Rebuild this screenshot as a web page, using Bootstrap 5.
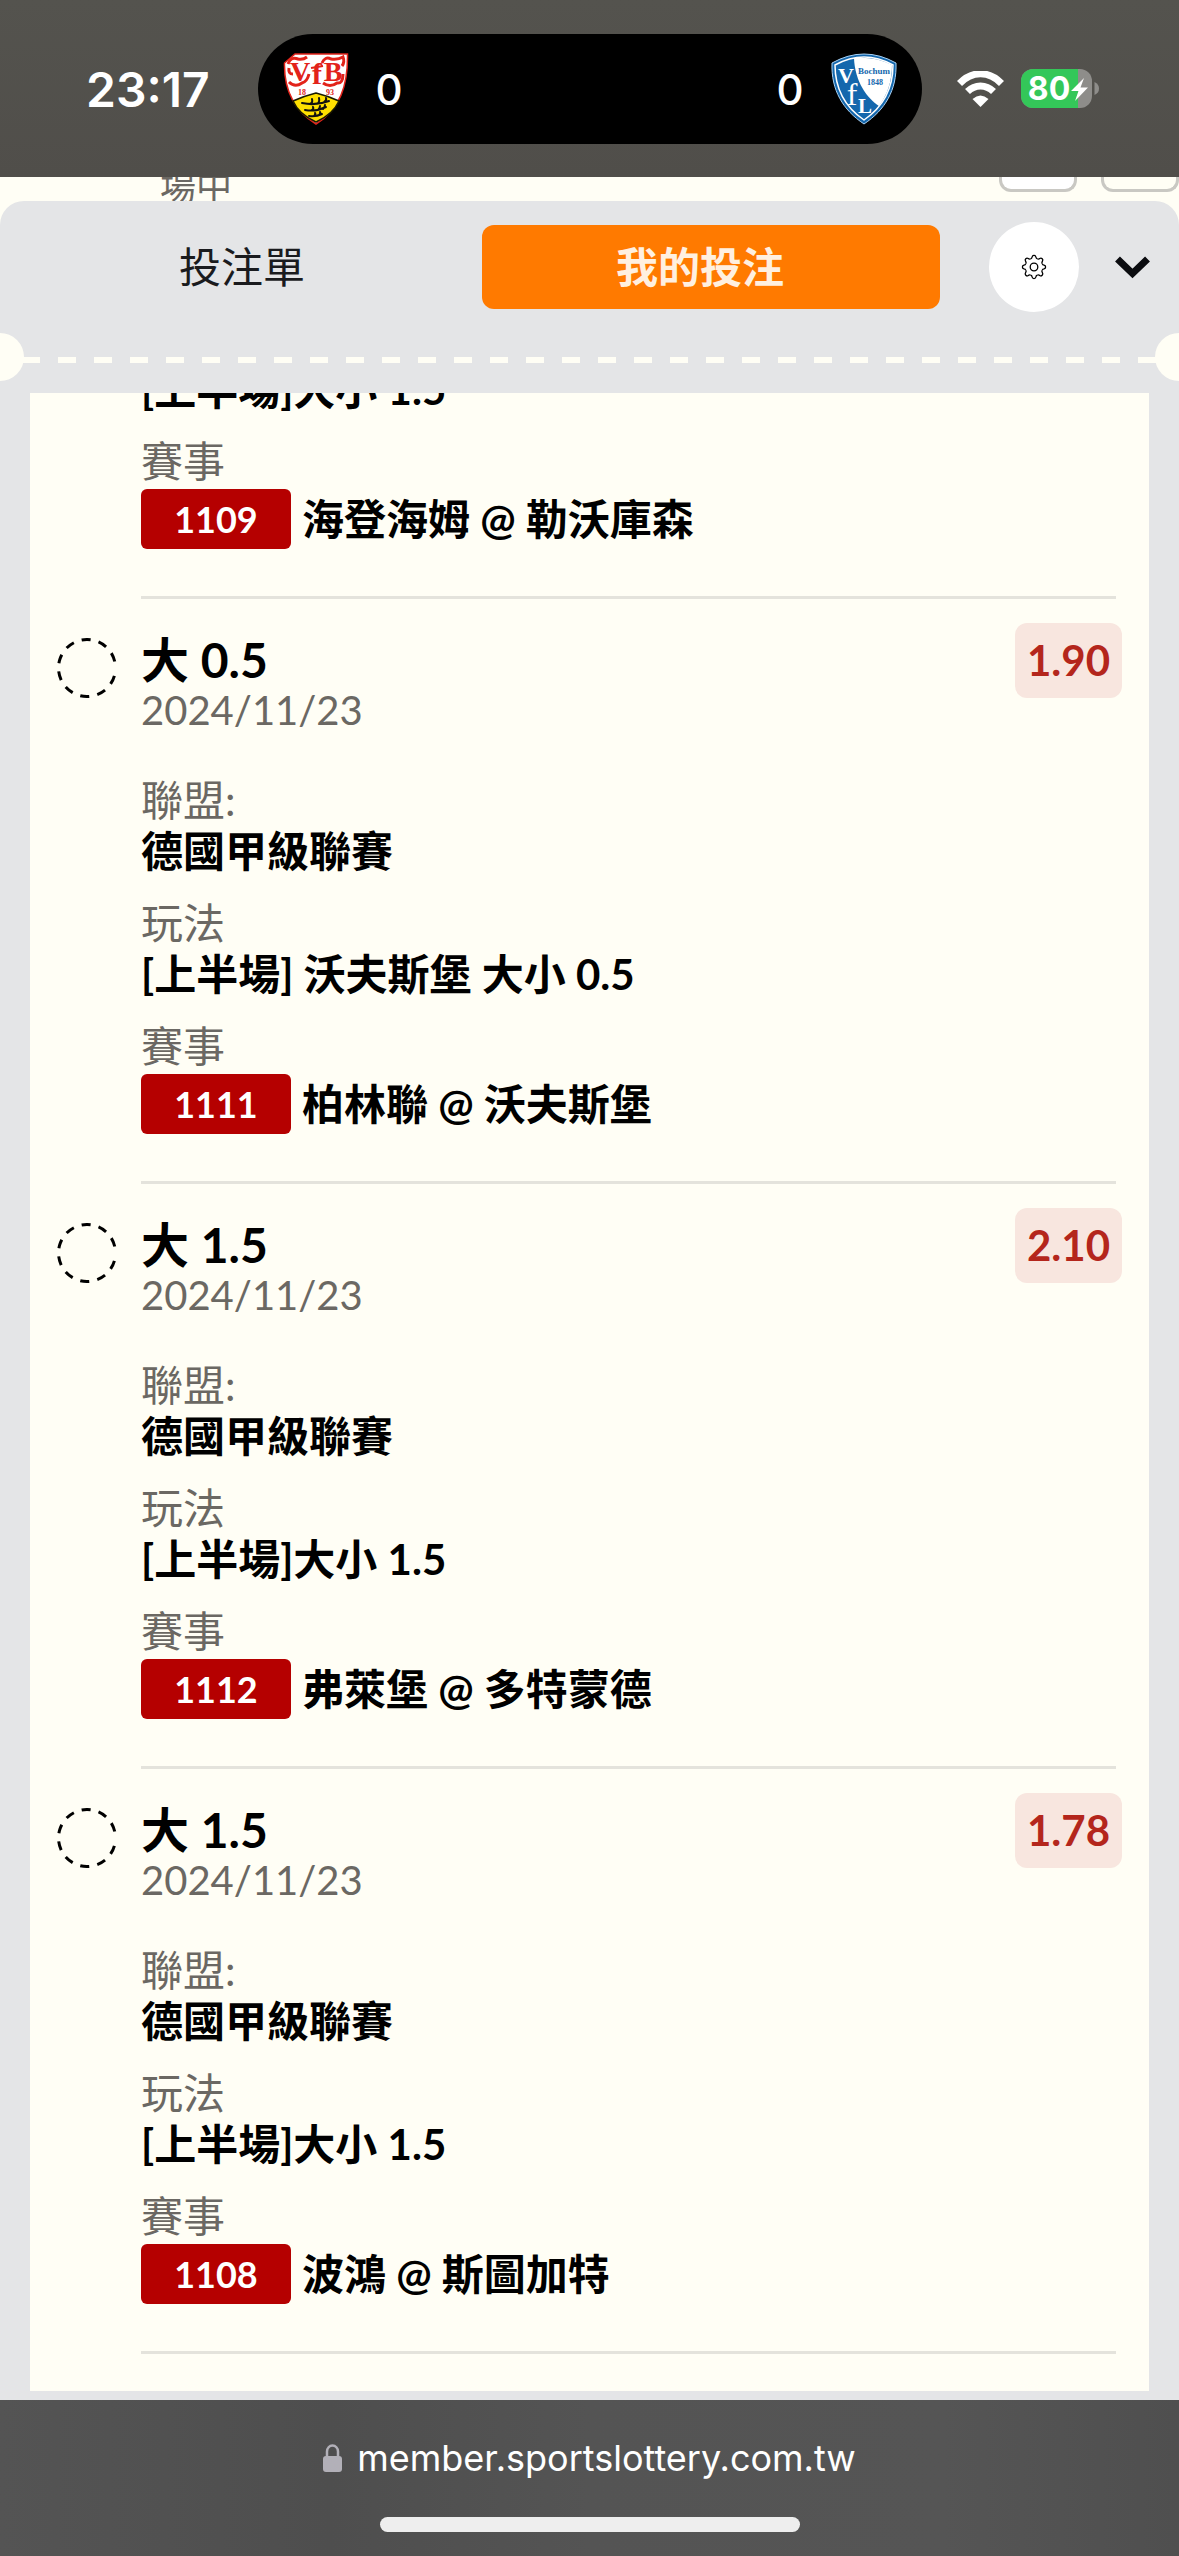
<!DOCTYPE html>
<html lang="zh-Hant">
<head>
<meta charset="utf-8">
<meta name="viewport" content="width=device-width, initial-scale=1">
<title>我的投注</title>
<link href="https://cdn.jsdelivr.net/npm/bootstrap@5.3.0/dist/css/bootstrap.min.css" rel="stylesheet">
<style>
  :root { --paper: #fffef5; --sheet: #e4e5e7; --muted: #6b6863; }
  body { background: var(--paper); color: #000; font-family: Lato, "Noto Sans CJK TC", sans-serif; font-size: 42px; line-height: 51px; }
  .btn { --bs-btn-padding-x: 0; --bs-btn-padding-y: 0; --bs-btn-border-width: 0; }

  /* status bar */
  .status-bar { grid-template-columns: 1fr 664px 1fr; height: 177px; padding-top: 34px; background: linear-gradient(#54534e, #504e4a); font-family: Inter, sans-serif; }
  .status-side { height: 110px; }
  .status-time { padding-left: 86px; font-size: 48px; font-weight: 600; }
  .status-icons { padding-left: 35px; gap: 17px; }
  .island { height: 110px; padding: 0 25px; background: #000; font-size: 42px; font-weight: 500; }
  .island-team { gap: 27px; }

  /* page behind the sheet */
  .backdrop-strip { height: 24px; padding-left: 160px; font-size: 36px; line-height: 36px; color: var(--muted); }
  .backdrop-text { padding-bottom: 6px; }
  .stub-box { width: 78px; height: 15px; border: 3px solid #c9c8c3; border-top: 0; border-radius: 0 0 12px 12px; }

  /* betting slip sheet */
  .slip-sheet { background: var(--sheet); border-radius: 24px 24px 0 0; min-height: 0; padding-bottom: 9px; }
  .slip-header { padding: 21px 29px 21px 24px; }
  .slip-tab { height: 84px; padding-right: 22px; border-radius: 12px; font-size: 42px; color: #1a1b1e; }
  .slip-tab.active { background: #ff7a00; color: #fff0e0; font-weight: 700; }
  .gear-btn { width: 90px; height: 90px; margin-left: 49px; background: #fff; }
  .fold-btn { margin-left: 36px; }
  .perforation { height: 48px; margin-bottom: 12px; background: linear-gradient(90deg, var(--paper) 50%, transparent 50%) 22px 24px / 36px 6px repeat-x; }
  .notch { width: 24px; height: 48px; background: var(--paper); border-radius: 0 24px 24px 0; }
  .notch-end { border-radius: 24px 0 0 24px; }

  /* bets */
  .bet-list { margin: 0 30px; background: var(--paper); min-height: 0; padding-bottom: 37px; }
  .bet { padding: 0 27px 0 27px; }
  .bet-mark { width: 60px; margin: 39px 24px 0 0; }
  .bet-body { padding-top: 35px; }
  .bet-body.cut { margin-left: 84px; padding-top: 0; }
  .bet-title { font-size: 48px; line-height: 51px; font-weight: 700; }
  .bet-date { color: var(--muted); margin-bottom: 39px; font-size: 40px; }
  .bet-facts dt { color: var(--muted); font-weight: 400; }
  .bet-facts dd { margin-bottom: 21px; font-weight: 700; }
  .bet-facts dd.bet-match { margin: 2px 0 47px; gap: 11px; }
  .match-no { width: 150px; height: 60px; border-radius: 6px; background: #b50000; color: #fff; font-size: 36px; }
  .odds { margin-top: 24px; height: 75px; padding: 0 12px; border-radius: 12px; background: #f8e6df; color: #b4261c; font-weight: 700; }
  .bet-rule { height: 3px; margin: 0 33px 0 111px; background: #e4e3dc; }

  /* browser bar */
  .browser-bar { height: 156px; padding: 40px 0 24px; background: linear-gradient(90deg, #545454, #4e4e4e 28%, #545454 50%, #555 80%, #4f4f4f); }
  .browser-url { gap: 15px; color: #fff; font-family: Inter, sans-serif; font-size: 36px; line-height: 36px; }
  .home-pill { width: 420px; height: 15px; background: #eee; }
</style>
<script src="https://cdn.jsdelivr.net/npm/bootstrap@5.3.0/dist/js/bootstrap.bundle.min.js"></script>
</head>
<body>
<svg class="d-none" aria-hidden="true">
  <symbol id="pending" viewBox="0 0 60 60">
    <circle cx="30" cy="30" r="28.5" fill="none" stroke="#000" stroke-width="3" transform="rotate(16 30 30)"
      stroke-dasharray="9 8.25 9 8.25 9 8.25 9 8.25 9 8.25 9 8.25 9 8.25 9 8.25 9 8.25 9 30"/>
  </symbol>
</svg>
<div class="d-flex flex-column vh-100 overflow-hidden">

  <header class="status-bar d-grid flex-shrink-0 text-white">
    <div class="status-side status-time d-flex align-items-center">23:17</div>
    <div class="island rounded-pill d-flex justify-content-between align-items-center">
      <div class="island-team d-flex align-items-center">
        <svg width="66" height="74" viewBox="0 0 66 74" role="img" aria-label="VfB Stuttgart">
          <path d="M12 2H64.500C65 34 57 57 33 72C9 57 1 34 1.500 11Z" fill="#fff" stroke="#e2231a" stroke-width="1.500"/>
          <path d="M33 41Q45 44 56 49C52 58 44 65 33 70C22 65 14 58 10 49Q21 44 33 41Z" fill="#ffe000" stroke="#1a1a00" stroke-width="1.500"/>
          <g fill="none" stroke="#111" stroke-width="2" stroke-linecap="round">
            <path d="M19 51Q33 54 46 49M27 52Q30 51 29 47M34 52Q37 50 36 46M41 50Q44 48 43 46"/>
            <path d="M22 58Q33 60 43 55M29 58Q31 57 30 55M35 58Q37 56 37 54M40 57Q42 55 42 53"/>
            <path d="M26 64Q33 65 39 62M31 64Q33 62 32 61M36 63Q38 61 37 60"/>
          </g>
          <g fill="#e2231a" font-family="'Liberation Serif', serif" font-weight="700">
            <text x="17" y="29" font-size="28" text-anchor="middle">V</text>
            <text x="34" y="32" font-size="30" text-anchor="middle">f</text>
            <text x="50" y="29" font-size="28" text-anchor="middle">B</text>
            <text x="19" y="43" font-size="8" text-anchor="middle">18</text>
            <text x="47" y="43" font-size="8" text-anchor="middle">93</text>
          </g>
          <g fill="none" stroke="#e2231a" stroke-width="3">
            <path d="M5 12Q8 4 15 7Q20 8 24 5M6 30Q12 36 19 31Q24 30 26 22M6 16Q5 22 10 22"/>
            <path d="M39 11Q42 4 48 7Q55 8 60 5Q62 10 59 14M40 31Q47 36 54 31Q60 32 60 22"/>
            <path d="M28 16L40 14" stroke-width="2"/>
          </g>
        </svg>
        <span>0</span>
      </div>
      <div class="island-team d-flex align-items-center">
        <span>0</span>
        <svg width="66" height="74" viewBox="0 0 66 74" role="img" aria-label="VfL Bochum 1848">
          <path d="M1 11Q33-7 65 11C66 38 54 58 33 72C12 58 0 38 1 11Z" fill="#1467ad" stroke="#a9d2f5"/>
          <path d="M4 13Q33-3 62 13C62 37 52 55 33 68C14 55 4 37 4 13Z" fill="#1467ad" stroke="#fff" stroke-width="1.500"/>
          <path d="M23 6Q44 4 61 13C61 30 56 43 48 54C36 46 24 30 23 6Z" fill="#fff"/>
          <g fill="#fff" font-family="'Liberation Serif', serif" font-weight="700" text-anchor="middle">
            <text x="15" y="31" font-size="22">V</text>
            <text x="21" y="53" font-size="32" font-weight="400">f</text>
            <text x="34" y="61" font-size="21">L</text>
          </g>
          <g fill="#1467ad" font-family="'Liberation Serif', serif" font-weight="700" text-anchor="middle">
            <text x="43" y="22" font-size="9">Bochum</text>
            <text x="44" y="33" font-size="8">1848</text>
          </g>
        </svg>
      </div>
    </div>
    <div class="status-side status-icons d-flex align-items-center">
      <svg width="47" height="36" viewBox="0 0 47 36" fill="none" stroke="#fff" role="img" aria-label="Wi-Fi">
        <path d="M2.500 12.500C15-.500 32-.500 44.500 12.500" stroke-width="7"/>
        <path d="M10.500 20.500C18 13 29 13 36.500 20.500" stroke-width="7"/>
        <path d="M15.500 28Q23.500 21 31.500 28L23.500 36Z" fill="#fff" stroke="none"/>
      </svg>
      <svg width="78" height="40" viewBox="0 0 78 40" role="img" aria-label="80%">
        <clipPath id="cell"><rect width="71" height="39" rx="12"/></clipPath>
        <g clip-path="url(#cell)"><rect width="71" height="39" fill="#8e8d8a"/><rect width="57" height="39" fill="#34c759"/></g>
        <path d="M73.500 13Q78 15 78 19.500T73.500 26Z" fill="#8e8d8a"/>
        <text x="28" y="31" font-size="32" font-weight="700" text-anchor="middle" fill="#fff" font-family="Inter, sans-serif">80</text>
        <path d="M63 9L50 22H57.500L54 32L67 18.500H59.500Z" fill="#fff"/>
      </svg>
    </div>
  </header>

  <div class="backdrop-strip d-flex flex-shrink-0 justify-content-between overflow-hidden">
    <div class="backdrop-text d-flex align-items-center">場中</div>
    <div class="d-flex gap-4">
      <div class="stub-box bg-white"></div>
      <div class="stub-box"></div>
    </div>
  </div>

  <main class="slip-sheet d-flex flex-column flex-grow-1">
    <div class="slip-header d-flex align-items-center">
      <div class="d-flex flex-grow-1" role="tablist">
        <button type="button" class="slip-tab btn w-50" role="tab" aria-selected="false">投注單</button>
        <button type="button" class="slip-tab btn w-50 active" role="tab" aria-selected="true">我的投注</button>
      </div>
      <button type="button" class="gear-btn btn rounded-circle d-flex align-items-center justify-content-center" aria-label="設定">
        <svg width="26" height="26" viewBox="-13 -13 26 26" fill="none" stroke="#000" stroke-width="1.300">
          <g id="teeth">
            <path id="tooth" d="M-3.400-8.200Q-2-8.600-1.900-10Q-1.600-11.600 0-11.600Q1.600-11.600 1.900-10Q2-8.600 3.400-8.200"/>
            <use href="#tooth" transform="rotate(45)"/>
            <use href="#tooth" transform="rotate(90)"/>
            <use href="#tooth" transform="rotate(135)"/>
          </g>
          <use href="#teeth" transform="rotate(180)"/>
          <circle r="3.800"/>
        </svg>
      </button>
      <button type="button" class="fold-btn btn d-flex" aria-label="收合">
        <svg width="35" height="24" viewBox="0 0 35 24" fill="none" stroke="#0b0c10" stroke-width="7"><path d="M2.500 4L17.500 18.500L32.500 4"/></svg>
      </button>
    </div>
    <div class="perforation d-flex flex-shrink-0 justify-content-between">
      <div class="notch"></div>
      <div class="notch notch-end"></div>
    </div>

    <section class="bet-list d-flex flex-column flex-grow-1 justify-content-end overflow-hidden">
      <article class="bet d-flex">
        <div class="bet-body cut flex-grow-1">
          <dl class="bet-facts mb-0">
            <dd>[上半場]大小 1.5</dd>
            <dt>賽事</dt>
            <dd class="bet-match d-flex align-items-center"><span class="match-no d-flex align-items-center justify-content-center">1109</span>海登海姆 @ 勒沃庫森</dd>
          </dl>
        </div>
      </article>
      <div class="bet-rule flex-shrink-0"></div>

      <article class="bet d-flex">
        <svg class="bet-mark flex-shrink-0" height="60"><use href="#pending"/></svg>
        <div class="bet-body flex-grow-1">
          <div class="bet-title">大 0.5</div>
          <div class="bet-date">2024/11/23</div>
          <dl class="bet-facts mb-0">
            <dt>聯盟:</dt><dd>德國甲級聯賽</dd>
            <dt>玩法</dt><dd>[上半場] 沃夫斯堡 大小 0.5</dd>
            <dt>賽事</dt>
            <dd class="bet-match d-flex align-items-center"><span class="match-no d-flex align-items-center justify-content-center">1111</span>柏林聯 @ 沃夫斯堡</dd>
          </dl>
        </div>
        <div class="odds d-flex align-items-center">1.90</div>
      </article>
      <div class="bet-rule flex-shrink-0"></div>

      <article class="bet d-flex">
        <svg class="bet-mark flex-shrink-0" height="60"><use href="#pending"/></svg>
        <div class="bet-body flex-grow-1">
          <div class="bet-title">大 1.5</div>
          <div class="bet-date">2024/11/23</div>
          <dl class="bet-facts mb-0">
            <dt>聯盟:</dt><dd>德國甲級聯賽</dd>
            <dt>玩法</dt><dd>[上半場]大小 1.5</dd>
            <dt>賽事</dt>
            <dd class="bet-match d-flex align-items-center"><span class="match-no d-flex align-items-center justify-content-center">1112</span>弗萊堡 @ 多特蒙德</dd>
          </dl>
        </div>
        <div class="odds d-flex align-items-center">2.10</div>
      </article>
      <div class="bet-rule flex-shrink-0"></div>

      <article class="bet d-flex">
        <svg class="bet-mark flex-shrink-0" height="60"><use href="#pending"/></svg>
        <div class="bet-body flex-grow-1">
          <div class="bet-title">大 1.5</div>
          <div class="bet-date">2024/11/23</div>
          <dl class="bet-facts mb-0">
            <dt>聯盟:</dt><dd>德國甲級聯賽</dd>
            <dt>玩法</dt><dd>[上半場]大小 1.5</dd>
            <dt>賽事</dt>
            <dd class="bet-match d-flex align-items-center"><span class="match-no d-flex align-items-center justify-content-center">1108</span>波鴻 @ 斯圖加特</dd>
          </dl>
        </div>
        <div class="odds d-flex align-items-center">1.78</div>
      </article>
      <div class="bet-rule flex-shrink-0"></div>
    </section>
  </main>

  <footer class="browser-bar d-flex flex-column flex-shrink-0 align-items-center justify-content-between">
    <a class="browser-url d-flex align-items-center text-decoration-none" href="#">
      <svg width="19" height="28" viewBox="0 0 19 28" aria-hidden="true">
        <rect y="12" width="19" height="16" rx="3" fill="#b2b0b8"/>
        <path d="M4 13V7.500a5.500 6 0 0 1 11 0V13" fill="none" stroke="#b2b0b8" stroke-width="2.500"/>
      </svg>
      member.sportslottery.com.tw
    </a>
    <div class="home-pill rounded-pill"></div>
  </footer>
</div>
</body>
</html>
